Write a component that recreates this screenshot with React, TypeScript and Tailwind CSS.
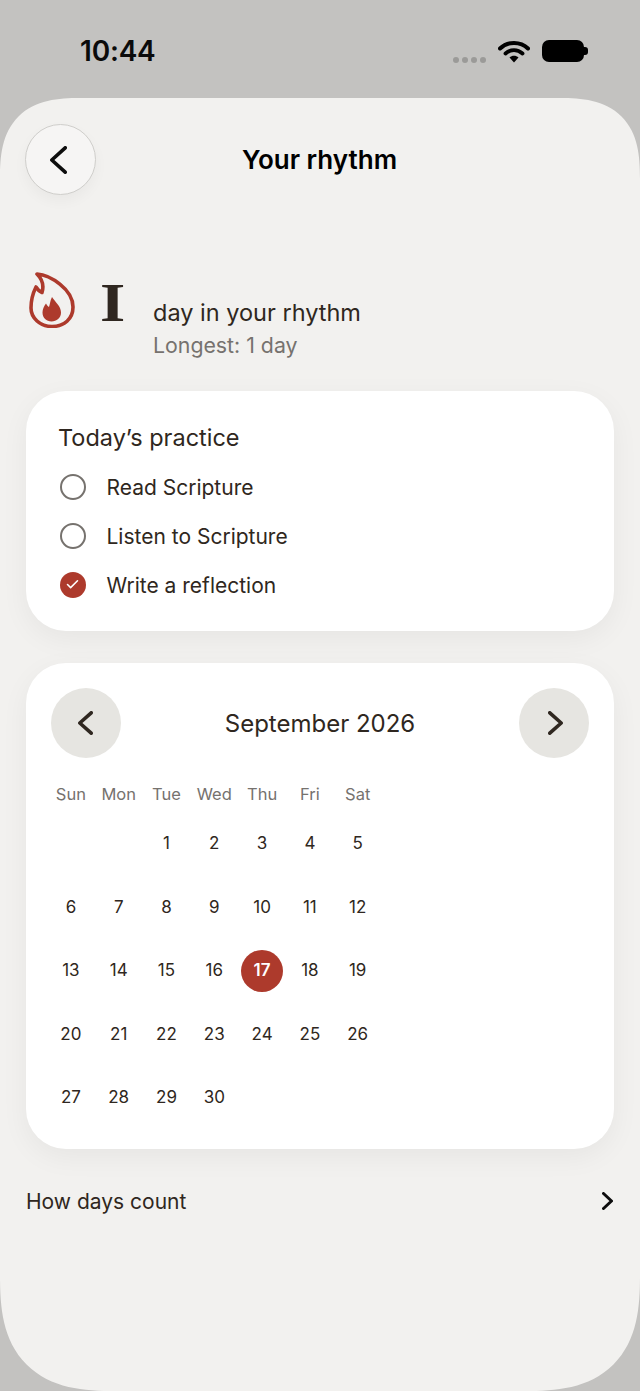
import { Check } from "lucide-react";

const WEEKDAYS = ["Sun", "Mon", "Tue", "Wed", "Thu", "Fri", "Sat"];
const PRACTICES = [
  { label: "Read Scripture", done: false },
  { label: "Listen to Scripture", done: false },
  { label: "Write a reflection", done: true },
];
// September 2026 starts on a Tuesday
const DAYS: (number | null)[] = [null, null, ...Array.from({ length: 30 }, (_, i) => i + 1)];

function Chevron({ dir, w, h, stroke, color }: { dir: "left" | "right"; w: number; h: number; stroke: number; color: string }) {
  const p = stroke / 2;
  const points =
    dir === "left"
      ? `${w - p},${p} ${p},${h / 2} ${w - p},${h - p}`
      : `${p},${p} ${w - p},${h / 2} ${p},${h - p}`;
  return (
    <svg width={w} height={h} viewBox={`0 0 ${w} ${h}`} className="shrink-0">
      <polyline points={points} fill="none" stroke={color} strokeWidth={stroke} strokeLinecap="round" strokeLinejoin="round" />
    </svg>
  );
}

function StatusBar() {
  return (
    <div className="h-[98px] shrink-0 flex items-start justify-between pt-[34px] pl-[80px] pr-[52px]">
      <span className="text-[28px] leading-[34px] font-semibold text-[#0b0b0b] tracking-[-0.2px]">10:44</span>
      <div className="flex items-start pt-[6px]">
        <div className="flex gap-[3px] mt-[17px] mr-[12px]">
          <span className="w-[6px] h-[6px] rounded-full bg-[#9b9a98]" />
          <span className="w-[6px] h-[6px] rounded-full bg-[#9b9a98]" />
          <span className="w-[6px] h-[6px] rounded-full bg-[#9b9a98]" />
          <span className="w-[6px] h-[6px] rounded-full bg-[#9b9a98]" />
        </div>
        <svg width="32" height="23" viewBox="0 0 32 23" className="mr-[12px]">
          <path d="M2 8.500C9.500 1 22.500 1 30 8.500" fill="none" stroke="#000" strokeWidth="4" strokeLinecap="round" />
          <path d="M7.500 13.500C12.500 9 19.500 9 24.500 13.500" fill="none" stroke="#000" strokeWidth="3.800" strokeLinecap="round" />
          <path d="M11.500 17.500C14 15 18 15 20.500 17.500L16 22.500Z" fill="#000" />
        </svg>
        <div className="w-[42px] h-[22px] rounded-[7px] bg-black" />
        <div className="w-[4px] h-[8px] rounded-r-[3px] bg-black mt-[7px]" />
      </div>
    </div>
  );
}

function Flame() {
  return (
    <svg width="46" height="56" viewBox="0 0 46 56" className="shrink-0 ml-[3px]">
      <path
        d="M8 2C21 3 44 17 44 35C44 47 35 54.500 23 54.500C11 54.500 2 46 2 36C2 27 4 21 7 15C8.500 17.500 10.500 19.500 13 20.500C15 14 13 7 8 2Z"
        fill="none"
        stroke="#ad3a2c"
        strokeWidth="3.600"
        strokeLinejoin="round"
      />
      <path
        d="M23 25C26 30 32 34 32 40.500C32 46 27.500 49.500 22.500 49.500C17.500 49.500 13.500 46 13.500 40.500C13.500 37 15 34 17 31.500C18 33.500 19 34.500 20 35C21 32 21 29 23 25Z"
        fill="#ad3a2c"
      />
    </svg>
  );
}

export default function App() {
  return (
    <div className="w-[640px] h-[1391px] overflow-hidden flex flex-col bg-[#c3c2c0] font-['Inter',sans-serif] text-[#2f2720]">
      <StatusBar />
      <div className="flex-1 rounded-t-[80px] rounded-b-[115px] [corner-shape:superellipse(1.4)] bg-[#f2f1ef] px-[26px]">
        <div className="relative flex items-center h-[71px] mt-[26px] -ml-px">
          <button className="w-[71px] h-[71px] rounded-full border border-[#cfcecb] bg-[#f6f5f4] shadow-[0_6px_14px_rgba(0,0,0,0.04)] flex items-center justify-center">
            <span className="-ml-[5px] flex">
              <Chevron dir="left" w={17} h={28} stroke={3.600} color="#0d0d0d" />
            </span>
          </button>
          <h1 className="absolute left-0 right-0 text-center text-[26px] leading-[32px] font-semibold text-black">
            Your rhythm
          </h1>
        </div>

        <div className="flex mt-[77px] h-[90px]">
          <Flame />
          <span className="inline-block w-[53px] ml-[25px] mt-[1px] origin-left scale-x-[1.18] font-['Liberation_Serif',serif] text-[55px] leading-[60px] font-bold">I</span>
          <div className="pt-[25px]">
            <p className="text-[23.500px] leading-[32px]">day in your rhythm</p>
            <p className="text-[21.300px] leading-[32px] text-[#76726e]">Longest: 1 day</p>
          </div>
        </div>

        <section className="h-[240px] mt-[29px] rounded-[40px] bg-white shadow-[0_8px_28px_rgba(0,0,0,0.05)] pl-[32px] pt-[30px]">
          <h2 className="text-[23.500px] leading-[34px]">Today’s practice</h2>
          <ul className="mt-[7px]">
            {PRACTICES.map((p) => (
              <li key={p.label} className="flex items-center h-[49px] pl-[1.500px]">
                {p.done ? (
                  <span className="w-[26px] h-[26px] rounded-full bg-[#ad3a2c] flex items-center justify-center">
                    <Check size={15} strokeWidth={2.500} color="#fff" />
                  </span>
                ) : (
                  <span className="w-[26px] h-[26px] rounded-full border-[2px] border-[#76726e]" />
                )}
                <span className="ml-[21px] mt-[2px] text-[21px] leading-[30px]">{p.label}</span>
              </li>
            ))}
          </ul>
        </section>

        <section className="h-[486px] mt-[32px] rounded-[40px] bg-white shadow-[0_8px_28px_rgba(0,0,0,0.05)] px-[25px] pt-[25px]">
          <div className="flex items-center justify-between">
            <button className="w-[70px] h-[70px] rounded-full bg-[#e6e5e1] flex items-center justify-center">
              <span className="-ml-[2px] flex">
                <Chevron dir="left" w={15} h={24} stroke={3.600} color="#2f2720" />
              </span>
            </button>
            <h2 className="mt-[2px] text-[24px] leading-[32px]">September 2026</h2>
            <button className="w-[70px] h-[70px] rounded-full bg-[#e6e5e1] flex items-center justify-center">
              <span className="ml-[2px] flex">
                <Chevron dir="right" w={15} h={24} stroke={3.600} color="#2f2720" />
              </span>
            </button>
          </div>
          <div className="grid grid-cols-[repeat(7,47.800px)] -ml-[4px] mt-[24px]">
            {WEEKDAYS.map((d) => (
              <span key={d} className="h-[24px] flex items-center justify-center text-[16.500px] text-[#76726e]">
                {d}
              </span>
            ))}
          </div>
          <div className="grid grid-cols-[repeat(7,47.800px)] auto-rows-[63.500px] -ml-[4px] mt-[6px]">
            {DAYS.map((d, i) => (
              <div key={i} className="flex items-center justify-center text-[17px]">
                {d === 17 ? (
                  <span className="w-[42px] h-[42px] rounded-full bg-[#ad3a2c] text-white font-semibold flex items-center justify-center">
                    {d}
                  </span>
                ) : (
                  d
                )}
              </div>
            ))}
          </div>
        </section>

        <div className="flex items-center justify-between mt-[36px] h-[32px]">
          <span className="mt-[2px] text-[21px]">How days count</span>
          <span className="mr-[1px] flex">
            <Chevron dir="right" w={11} h={18} stroke={3} color="#0d0d0d" />
          </span>
        </div>
      </div>
    </div>
  );
}
